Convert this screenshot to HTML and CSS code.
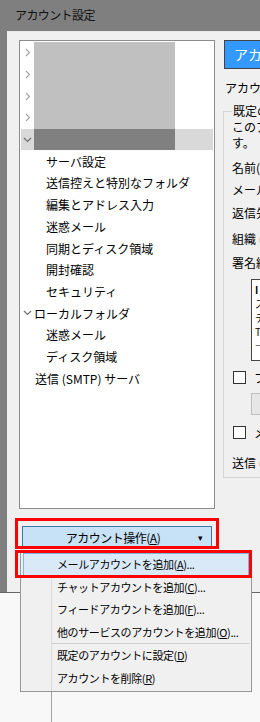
FILE: index.html
```html
<!DOCTYPE html>
<html lang="ja">

<head>
    <meta charset="UTF-8">
    <meta name="viewport" content="width=device-width, initial-scale=1.0">
    <title>アカウント設定</title>
    <link rel="stylesheet" href="styles.css">
</head>

<body>
    <div class="screen">
        <div class="titlebar">アカウント設定</div>

        <div class="dialog">
            <div class="leftCol">
                <div class="tree">
                    <div class="row"><span class="twisty"><svg width="6" height="9" viewBox="0 0 6 9"><path d="M1 1l3.5 3.5L1 8" fill="none" stroke="#a6a6a6" stroke-width="1.2"/></svg></span><span class="redact"></span></div>
                    <div class="row"><span class="twisty"><svg width="6" height="9" viewBox="0 0 6 9"><path d="M1 1l3.5 3.5L1 8" fill="none" stroke="#a6a6a6" stroke-width="1.2"/></svg></span><span class="redact"></span></div>
                    <div class="row"><span class="twisty"><svg width="6" height="9" viewBox="0 0 6 9"><path d="M1 1l3.5 3.5L1 8" fill="none" stroke="#a6a6a6" stroke-width="1.2"/></svg></span><span class="redact"></span></div>
                    <div class="row"><span class="twisty"><svg width="6" height="9" viewBox="0 0 6 9"><path d="M1 1l3.5 3.5L1 8" fill="none" stroke="#a6a6a6" stroke-width="1.2"/></svg></span><span class="redact"></span></div>
                    <div class="row selected"><span class="twisty"><svg width="9" height="6" viewBox="0 0 9 6"><path d="M1 1l3.5 3.5L8 1" fill="none" stroke="#707070" stroke-width="1.2"/></svg></span><span class="redact dark"></span></div>
                    <div class="row sub">サーバ設定</div>
                    <div class="row sub">送信控えと特別なフォルダ</div>
                    <div class="row sub">編集とアドレス入力</div>
                    <div class="row sub">迷惑メール</div>
                    <div class="row sub">同期とディスク領域</div>
                    <div class="row sub">開封確認</div>
                    <div class="row sub">セキュリティ</div>
                    <div class="row"><span class="twisty"><svg width="9" height="6" viewBox="0 0 9 6"><path d="M1 1l3.5 3.5L8 1" fill="none" stroke="#707070" stroke-width="1.2"/></svg></span>ローカルフォルダ</div>
                    <div class="row sub">迷惑メール</div>
                    <div class="row sub">ディスク領域</div>
                    <div class="row smtp">送信 (SMTP) サーバ</div>
                </div>

                <button class="accountBtn" type="button">
                    <span class="accountBtnText">アカウント操作(<u>A</u>)</span>
                    <span class="accountBtnArrow">▾</span>
                </button>
            </div>

            <div class="rightCol">
                <div class="accountTab">アカウント設定 - &lt;アカウント&gt;</div>
                <p class="plain accountName">アカウント名(N):</p>
                <fieldset class="groupBox">
                    <legend>既定の差出人情報</legend>
                    <p class="plain">このアカウントで使用する既定の差出人情報を設定しま</p>
                    <p class="plain">す。</p>
                    <p class="plain nameRow">名前(Y):</p>
                    <p class="plain mailRow">メールアドレス(E):</p>
                    <p class="plain replyRow">返信先 (Reply-to)(S):</p>
                    <p class="plain orgRow">組織 (Organization)(O):</p>
                    <p class="plain sigRow">署名編集(X):</p>
                    <div class="signature">
                        <b>I</b><br>ス<br>テ<br>T<br>—
                    </div>
                    <div class="checkRow firstCheck"><span class="checkbox"></span>ファイルから署名を挿入する</div>
                    <div class="disabledBtn">参照(C)...</div>
                    <div class="checkRow secondCheck"><span class="checkbox"></span>メールに vCard を添付する(V)</div>
                    <p class="plain sendRow">送信 (SMTP) サーバ(U):</p>
                </fieldset>
            </div>
        </div>

        <div class="lower"><div class="lowerLine"></div></div>

        <div class="menu">
            <div class="menuItem active">メールアカウントを追加(<u>A</u>)...</div>
            <div class="menuItem">チャットアカウントを追加(<u>C</u>)...</div>
            <div class="menuItem">フィードアカウントを追加(<u>F</u>)...</div>
            <div class="menuItem">他のサービスのアカウントを追加(<u>O</u>)...</div>
            <div class="menuSep"></div>
            <div class="menuItem">既定のアカウントに設定(<u>D</u>)</div>
            <div class="menuItem">アカウントを削除(<u>R</u>)</div>
        </div>

        <div class="mark markButton"></div>
        <div class="mark markItem"></div>
    </div>
</body>

</html>
```

FILE: styles.css
```css
body {
    margin: 0;
    font-family: "Noto Sans CJK JP", "Noto Sans", sans-serif;
    font-size: 12px;
    color: #000;
}

.screen {
    position: relative;
    width: 260px;
    height: 722px;
    overflow: hidden;
    background-color: #7f7f7f;
}

.titlebar {
    height: 31px;
    line-height: 30px;
    padding-left: 15px;
    letter-spacing: -0.6px;
    color: #111;
}

.dialog {
    display: flex;
    gap: 8px;
    margin-left: 7px;
    height: 561px;
    padding: 8px 0 0 12px;
    box-sizing: border-box;
    background-color: #f0f0f0;
    border-top: 1px solid #e8e8e8;
}

.leftCol {
    display: flex;
    flex-direction: column;
    flex: none;
    width: 196px;
}

.tree {
    height: 469px;
    padding: 1px;
    box-sizing: border-box;
    background-color: #fff;
    border: 1px solid #8c8c8c;
}

.row {
    display: flex;
    align-items: center;
    height: 21.7px;
    white-space: nowrap;
}

.twisty {
    display: flex;
    align-items: center;
    justify-content: center;
    width: 13px;
    height: 100%;
    flex: none;
}

.redact {
    width: 141px;
    height: 100%;
    background-color: #c0c0c0;
}

.selected {
    background-color: #d9d9d9;
}

.redact.dark {
    background-color: #808080;
}

.sub {
    padding-left: 25px;
}

.smtp {
    padding-left: 14px;
}

.accountBtn {
    display: flex;
    align-items: center;
    width: 190px;
    height: 22px;
    margin: 17px 0 0 3px;
    padding: 0;
    font-family: inherit;
    font-size: 12px;
    letter-spacing: -0.5px;
    color: #000;
    background-color: #c7e2f6;
    border: 1px solid #3f76a3;
}

.accountBtnText {
    flex: 1;
    text-align: center;
    padding-left: 14px;
}

.accountBtnArrow {
    width: 22px;
    font-size: 9px;
    text-align: center;
}

.rightCol {
    flex: none;
    width: 320px;
}

.accountTab {
    height: 29px;
    margin-left: 1px;
    padding-left: 9px;
    box-sizing: border-box;
    line-height: 27px;
    font-size: 14px;
    color: #fff;
    white-space: nowrap;
    background-color: #3399ff;
    border: 1px solid #444;
}

.plain {
    margin: 0;
    line-height: 16px;
    white-space: nowrap;
}

.accountName {
    margin: 11px 0 0 2px;
}

.groupBox {
    margin: 7px 0 0 0;
    padding: 0 0 6px 8px;
    border: 1px solid #d5d5d5;
}

.groupBox legend {
    padding: 0 1px;
    line-height: 16px;
}

.nameRow { margin-top: 9px; }
.mailRow { margin-top: 6px; }
.replyRow { margin-top: 7px; }
.orgRow { margin-top: 10px; }
.sigRow { margin-top: 8px; }

.signature {
    width: 220px;
    height: 82px;
    margin: 8px 0 0 19px;
    padding: 3px 3px;
    box-sizing: border-box;
    font-size: 10px;
    line-height: 14px;
    background-color: #fff;
    border: 1px solid #444;
}

.checkRow {
    display: flex;
    align-items: center;
    gap: 8px;
    height: 16px;
    padding-left: 1px;
    white-space: nowrap;
}

.firstCheck { margin-top: 8px; }
.secondCheck { margin-top: 9px; }

.checkbox {
    width: 11px;
    height: 11px;
    background-color: #fff;
    border: 1px solid #333;
}

.disabledBtn {
    width: 80px;
    height: 22px;
    margin: 8px 0 0 19px;
    box-sizing: border-box;
    line-height: 20px;
    text-align: center;
    color: #a0a0a0;
    background-color: #e6e6e6;
    border: 1px solid #bfbfbf;
}

.sendRow { margin-top: 15px; }

.lower {
    height: 130px;
    background-color: #f8f8f8;
    border-top: 1px solid #666;
}

.lowerLine {
    width: 0;
    height: 100%;
    margin-left: 51px;
    border-left: 1px solid #a3a3a3;
}

.menu {
    position: absolute;
    left: 20px;
    top: 550px;
    width: 232px;
    padding: 2px 0;
    box-sizing: border-box;
    background: linear-gradient(to right, transparent 30px, #dadada 30px, #dadada 31px, transparent 31px), #f0f0f0;
    border: 1px solid #979797;
}

.menuItem {
    height: 22.5px;
    line-height: 22px;
    margin: 0 2px;
    padding-left: 34px;
    box-sizing: border-box;
    white-space: nowrap;
    font-size: 11px;
    letter-spacing: -0.4px;
}

.menuItem.active {
    background-color: #d9e9f8;
    border: 1px solid #7fb4e9;
    padding-left: 33px;
    line-height: 20px;
}

.menuSep {
    height: 1px;
    margin: 0 2px 0 31px;
    background-color: #cdcdcd;
}

.mark {
    position: absolute;
    border: 3px solid #ff0000;
    box-sizing: border-box;
}

.markButton {
    left: 15px;
    top: 518px;
    width: 204px;
    height: 31px;
}

.markItem {
    left: 15px;
    top: 550px;
    width: 237px;
    height: 28px;
}
```
